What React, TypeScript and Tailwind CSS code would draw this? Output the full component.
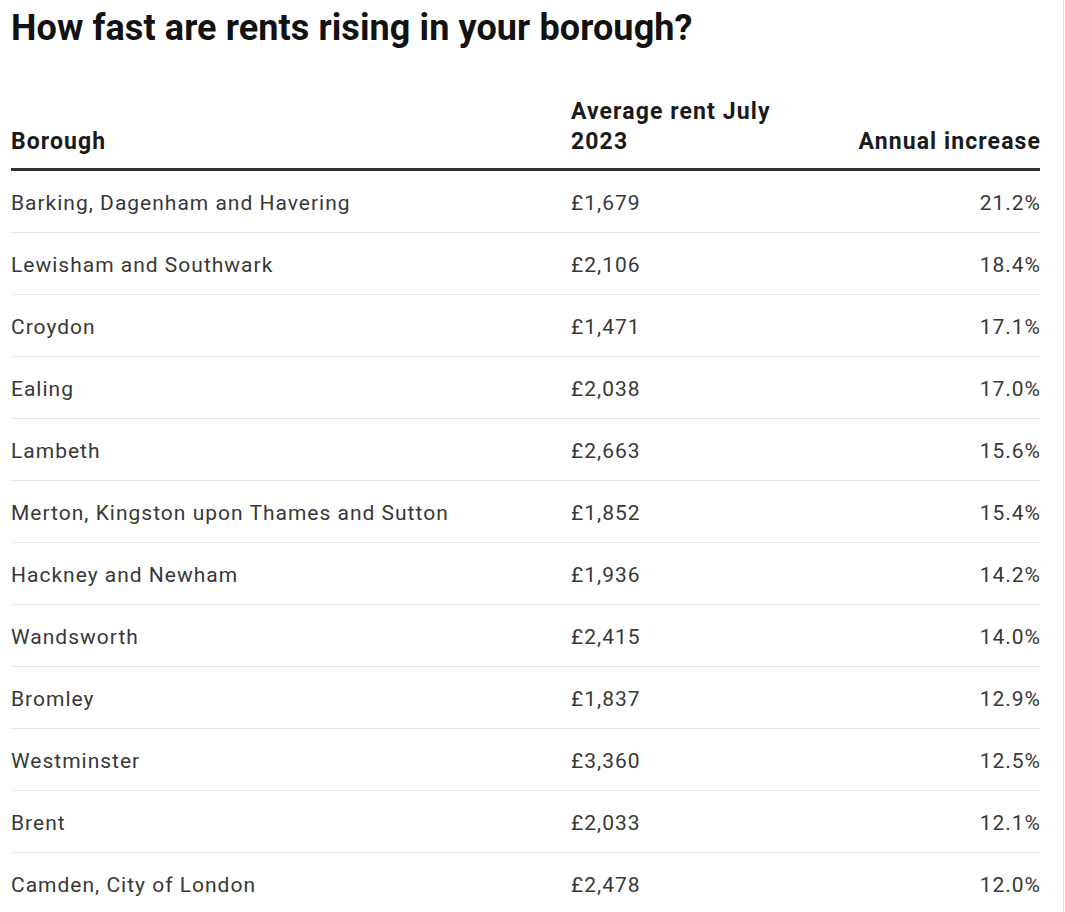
import React from "react";

const rows: [string, string, string][] = [
  ["Barking, Dagenham and Havering", "£1,679", "21.2%"],
  ["Lewisham and Southwark", "£2,106", "18.4%"],
  ["Croydon", "£1,471", "17.1%"],
  ["Ealing", "£2,038", "17.0%"],
  ["Lambeth", "£2,663", "15.6%"],
  ["Merton, Kingston upon Thames and Sutton", "£1,852", "15.4%"],
  ["Hackney and Newham", "£1,936", "14.2%"],
  ["Wandsworth", "£2,415", "14.0%"],
  ["Bromley", "£1,837", "12.9%"],
  ["Westminster", "£3,360", "12.5%"],
  ["Brent", "£2,033", "12.1%"],
  ["Camden, City of London", "£2,478", "12.0%"],
];

export default function App() {
  return (
    <div
      className="w-[1065px] h-[912px] overflow-hidden bg-white"
      style={{ fontFamily: "Roboto, 'Liberation Sans', sans-serif" }}
    >
      <div className="w-[1064px] h-full border-r border-[#e3e3e3] pl-[11px] pr-[23px]">
        <h1 className="pt-[8px] h-[47px] text-[36px] leading-[40px] tracking-[0.1px] font-bold text-[#121212]">
          How fast are rents rising in your borough?
        </h1>
        <div className="mt-[49px]">
          <div className="grid grid-cols-[560px_220px_1fr] items-end border-b-[3px] border-[#333333] pt-[1px] pb-[11px] text-[23px] leading-[30px] tracking-[1.1px] font-bold text-[#1a1a1a]">
            <div>Borough</div>
            <div>Average rent July 2023</div>
            <div className="text-right mr-[-1px]">Annual increase</div>
          </div>
          {rows.map(([b, r, p]) => (
            <div
              key={b}
              className="grid grid-cols-[560px_220px_1fr] items-center h-[62px] pt-[4px] border-b border-[#e6e6e6] text-[21px] tracking-[1px] text-[#383838]"
            >
              <div>{b}</div>
              <div>{r}</div>
              <div className="text-right mr-[-1px]">{p}</div>
            </div>
          ))}
        </div>
      </div>
    </div>
  );
}
